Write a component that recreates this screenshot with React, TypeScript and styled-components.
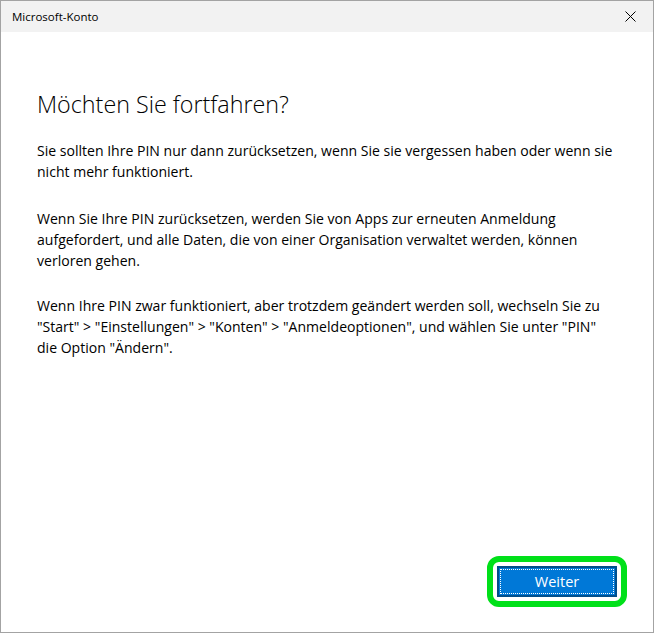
import React from "react";
import styled, { createGlobalStyle } from "styled-components";

const Global = createGlobalStyle`
  html, body { margin: 0; padding: 0; background: #ffffff; }
  body { font-family: "Open Sans", "Noto Sans", sans-serif; }
`;

const Window = styled.div`
  box-sizing: border-box;
  width: 654px;
  height: 633px;
  border: 1px solid #a3a3a3;
  background: #ffffff;
  display: flex;
  flex-direction: column;
`;

const TitleBar = styled.div`
  height: 31px;
  flex: none;
  background: #f2f2f2;
  display: flex;
  align-items: center;
  justify-content: space-between;
  padding: 0 0 0 11px;
`;

const TitleText = styled.span`
  font-family: "Open Sans", "Noto Sans", sans-serif;
  font-size: 11.5px;
  color: #000;
`;

const CloseButton = styled.div`
  width: 46px;
  height: 31px;
  display: flex;
  align-items: center;
  justify-content: center;
`;

const Content = styled.div`
  flex: 1;
  display: flex;
  flex-direction: column;
  padding: 56px 36px 35px 36px;
`;

const Heading = styled.h1`
  margin: 0 0 20px 0;
  font-family: "Open Sans", "Noto Sans", sans-serif;
  font-weight: 300;
  font-size: 23.3px;
  line-height: 32px;
  color: #000;
`;

const Paragraph = styled.p<{ $gap: number }>`
  margin: 0 0 ${(p) => p.$gap}px 0;
  font-family: "Open Sans", "Noto Sans", sans-serif;
  font-size: 14.05px;
  line-height: 21px;
  color: #000;
  white-space: nowrap;
`;

const Spacer = styled.div`
  flex: 1;
`;

const Footer = styled.div`
  display: flex;
  justify-content: flex-end;
`;

const ButtonWrap = styled.div`
  position: relative;
`;

const Highlight = styled.div`
  position: absolute;
  left: -10px;
  top: -10px;
  right: -10px;
  bottom: -10px;
  border: 6px solid #00e019;
  border-radius: 12px;
  pointer-events: none;
`;

const PrimaryButton = styled.button`
  position: relative;
  box-sizing: border-box;
  width: 120px;
  height: 31px;
  border: 2px solid #004e8c;
  background: #0078d7;
  color: #ffffff;
  font-family: "Open Sans", "Noto Sans", sans-serif;
  font-size: 14.5px;
  padding: 0;
  display: flex;
  align-items: center;
  justify-content: center;
  &::after {
    content: "";
    position: absolute;
    inset: 1px;
    border: 1px dotted #ffffff;
  }
`;

export default function App() {
  return (
    <>
      <Global />
      <Window>
        <TitleBar>
          <TitleText>Microsoft-Konto</TitleText>
          <CloseButton>
            <svg width="11" height="11" viewBox="0 0 11 11">
              <path d="M0.5 0.5 L10.5 10.5 M10.5 0.5 L0.5 10.5" stroke="#000" strokeWidth="1" fill="none" />
            </svg>
          </CloseButton>
        </TitleBar>
        <Content>
          <Heading>Möchten Sie fortfahren?</Heading>
          <Paragraph $gap={26}>
            Sie sollten Ihre PIN nur dann zurücksetzen, wenn Sie sie vergessen haben oder wenn sie
            <br />
            nicht mehr funktioniert.
          </Paragraph>
          <Paragraph $gap={24}>
            Wenn Sie Ihre PIN zurücksetzen, werden Sie von Apps zur erneuten Anmeldung
            <br />
            aufgefordert, und alle Daten, die von einer Organisation verwaltet werden, können
            <br />
            verloren gehen.
          </Paragraph>
          <Paragraph $gap={0}>
            Wenn Ihre PIN zwar funktioniert, aber trotzdem geändert werden soll, wechseln Sie zu
            <br />
            "Start" &gt; "Einstellungen" &gt; "Konten" &gt; "Anmeldeoptionen", und wählen Sie unter "PIN"
            <br />
            die Option "Ändern".
          </Paragraph>
          <Spacer />
          <Footer>
            <ButtonWrap>
              <PrimaryButton>Weiter</PrimaryButton>
              <Highlight />
            </ButtonWrap>
          </Footer>
        </Content>
      </Window>
    </>
  );
}
